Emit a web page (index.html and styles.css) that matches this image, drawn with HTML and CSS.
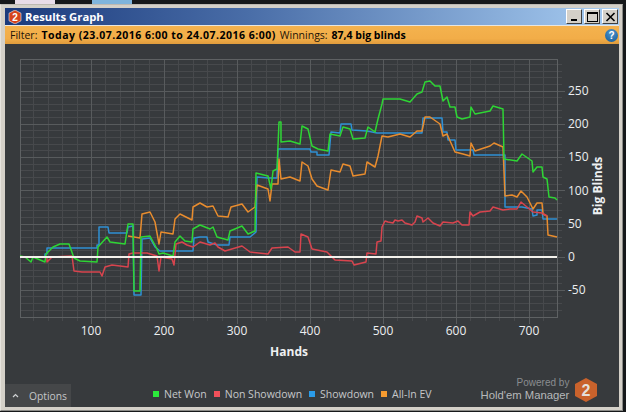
FILE: index.html
```
<!DOCTYPE html>
<html lang="en">
<head>
<meta charset="utf-8">
<title>Results Graph</title>
<link rel="stylesheet" href="styles.css">
</head>
<body>
<div class="desktop-top"><span class="chip chip-pink"></span><span class="chip chip-blue"></span></div>
<main class="window">
  <header class="titlebar">
    <svg class="app-logo" viewBox="0 0 14 14" width="14" height="14"><polygon points="7,0 13,3.2 13,10.8 7,14 1,10.8 1,3.2" class="logo-red"/><text x="7" y="11" class="logo-red-text">2</text></svg>
    <h1 class="title">Results Graph</h1>
    <div class="win-buttons">
      <button class="win-btn"><svg viewBox="0 0 15 14" width="15" height="14"><rect x="4" y="9" width="6" height="2" class="glyph"/></svg></button>
      <button class="win-btn"><svg viewBox="0 0 15 14" width="15" height="14"><rect x="2.5" y="2.5" width="10" height="9" class="glyph-box"/><rect x="2" y="2" width="11" height="2" class="glyph"/></svg></button>
      <button class="win-btn"><svg viewBox="0 0 15 14" width="15" height="14"><path d="M3.5 3 L11.5 11 M11.5 3 L3.5 11" class="glyph-x"/></svg></button>
    </div>
  </header>
  <div class="filterbar">
    <span>Filter:</span><b class="range">Today (23.07.2016 6:00 to 24.07.2016 6:00)</b><span>Winnings:</span><b class="win">87,4 big blinds</b>
    <span class="help">?</span>
  </div>
  <section class="panel">
    <svg class="chart" viewBox="5 45 615 327" width="615" height="327">
      <path class="grid-minor" d="M33.5 60V322M48.5 60V322M62.5 60V322M77.5 60V322M105.5 60V322M120.5 60V322M134.5 60V322M149.5 60V322M178.5 60V322M193.5 60V322M207.5 60V322M222.5 60V322M251.5 60V322M266.5 60V322M280.5 60V322M295.5 60V322M324.5 60V322M339.5 60V322M353.5 60V322M368.5 60V322M397.5 60V322M412.5 60V322M426.5 60V322M441.5 60V322M470.5 60V322M485.5 60V322M499.5 60V322M514.5 60V322M543.5 60V322"/>
      <path class="grid-minor" d="M20 65.5H562M20 72.5H562M20 78.5H562M20 85.5H562M20 98.5H562M20 105.5H562M20 111.5H562M20 118.5H562M20 131.5H562M20 138.5H562M20 145.5H562M20 151.5H562M20 165.5H562M20 171.5H562M20 178.5H562M20 185.5H562M20 198.5H562M20 204.5H562M20 211.5H562M20 218.5H562M20 231.5H562M20 238.5H562M20 244.5H562M20 251.5H562M20 264.5H562M20 271.5H562M20 277.5H562M20 284.5H562M20 297.5H562M20 304.5H562M20 311.5H562"/>
      <path class="grid-major" d="M91.5 60V325M164.5 60V325M237.5 60V325M310.5 60V325M383.5 60V325M456.5 60V325M529.5 60V325"/>
      <path class="grid-major" d="M20 92.5H565M20 125.5H565M20 158.5H565M20 191.5H565M20 225.5H565M20 258.5H565M20 291.5H565"/>
      <rect class="frame" x="20.5" y="60.5" width="537" height="257.5"/>

      <polyline class="line blue" points="20,258 45,258 45,255 47,255 47,249 97,249 97,246 99,246 99,228 108,228 109,234 127,234 128,228 133,227 134,296 141,296 142,240 150,239 155,248 160,252 193,252 194,239 200,238 207,238 208,243 217,246 229,246 230,238 250,238 256,233 257,178 268,179 271,179 277,179 278,150 299,150 310,150 311,153 317,153 317,156 329,156 331,133 340,134 341,125 351,125 352,131 367,132 377,134 422,134 423,119 442,119 443,133 447,133 448,141 455,141 456,151 473,151 474,156 503,156 505,156 505,208 522,208 532,210 533,217 537,216 537,211 542,211 543,220 557,220"/>
      <polyline class="line orange" points="128,237 140,239 142,215 150,213 155,223 159,245 161,233 173,235 175,220 180,215 192,221 193,208 200,204 207,208 213,207 218,217 228,218 231,208 242,205 248,213 255,208 257,186 268,190 270,202 272,185 278,185 279,160 281,180 290,178 300,182 302,163 308,167 312,180 317,187 328,191 331,171 340,173 343,165 350,167 353,177 365,175 367,163 375,168 378,157 382,137 388,138 400,135 410,138 417,132 422,132 425,118 430,118 440,125 443,137 447,135 455,153 463,155 470,157 471,144 475,152 490,147 494,144 503,148 505,197 512,196 517,198 521,192 527,198 533,210 537,204 542,204 543,215 547,217 548,236 557,238"/>
      <polyline class="line red" points="20,258 47,258 47,263 52,258 72,257 74,272 82,273 100,273 102,277 105,268 112,266 128,268 129,255 133,254 147,254 157,257 159,272 161,258 172,260 174,266 176,245 182,243 187,246 193,248 200,243 210,246 215,244 218,248 225,252 242,247 250,253 268,255 272,249 288,248 295,253 300,253 301,235 308,238 312,250 327,253 335,261 352,262 354,266 366,263 367,254 376,255 377,243 381,242 382,228 385,222 388,223 393,224 395,221 398,222 402,221 405,224 412,226 415,223 417,217 422,219 423,223 428,219 433,224 440,227 443,223 453,224 458,222 462,226 469,226 470,213 473,217 480,213 490,212 493,208 503,211 510,210 517,210 521,203 533,213 542,214 547,217"/>
      <polyline class="line green" points="20,257 25,258 31,263 33,258 45,263 46,255 53,248 60,245 69,245 74,259 80,262 97,263 98,248 107,238 110,243 125,245 128,225 133,225 134,292 140,292 141,238 150,237 157,250 159,255 163,254 173,257 175,243 180,237 185,242 192,243 193,230 200,226 210,230 213,228 217,238 228,241 230,232 242,227 248,235 255,232 256,174 268,177 271,190 273,172 277,170 279,123 281,123 281,143 290,142 300,145 302,127 308,130 312,147 318,150 328,152 330,135 340,137 343,128 350,130 353,140 365,139 368,128 375,133 378,120 382,105 383,100 400,100 410,103 417,95 422,93 425,83 430,82 435,87 440,87 443,102 447,98 450,108 455,108 457,118 462,120 470,118 471,108 475,115 490,112 493,107 503,110 504,160 517,162 522,155 532,162 533,173 537,168 542,168 543,178 547,180 549,198 555,199 557,201"/>
      <path class="zero" d="M20 258H557"/>

      <g class="tick">
        <text x="568" y="96">250</text><text x="568" y="129">200</text><text x="568" y="162">150</text><text x="568" y="196">100</text><text x="568" y="229">50</text><text x="568" y="262">0</text><text x="568" y="295">-50</text>
      </g>
      <g class="tick tick-x">
        <text x="91" y="336">100</text><text x="164" y="336">200</text><text x="237" y="336">300</text><text x="310" y="336">400</text><text x="383" y="336">500</text><text x="456" y="336">600</text><text x="529" y="336">700</text>
      </g>
      <text class="axis-label" x="289" y="357">Hands</text>
      <text class="axis-label" transform="translate(602 187) rotate(-90)">Big Blinds</text>
    </svg>
    <footer class="footer">
      <div class="options"><svg class="caret" viewBox="0 0 7 5" width="7" height="5"><path d="M1 4 L3.5 1.5 L6 4" class="caret-path"/></svg><span>Options</span></div>
      <ul class="legend">
        <li><i class="sw sw-green"></i>Net Won</li>
        <li><i class="sw sw-red"></i>Non Showdown</li>
        <li><i class="sw sw-blue"></i>Showdown</li>
        <li><i class="sw sw-orange"></i>All-In EV</li>
      </ul>
      <div class="brand">
        <div class="brand-text"><span class="powered">Powered by</span><span class="hem">Hold'em Manager</span></div>
        <svg class="brand-logo" viewBox="0 0 22 24" width="22" height="24"><polygon points="11,0 22,6 22,18 11,24 0,18 0,6" class="logo-orange"/><text x="11" y="18" class="logo-orange-text">2</text></svg>
      </div>
    </footer>
  </section>
</main>
</body>
</html>
```
FILE: styles.css
```
* { box-sizing: border-box; }
html, body { margin: 0; padding: 0; }
body {
  width: 626px; height: 412px; overflow: hidden;
  background: #16181a;
  font-family: "Open Sans", "Liberation Sans", sans-serif;
}
.desktop-top { height: 4px; display: flex; padding-left: 15px; gap: 37px; }
.chip { display: block; height: 4px; width: 40px; }
.chip-pink { background: #e8dce8; }
.chip-blue { background: #7fb4dc; }
.window {
  width: 623px; height: 407px;
  background: #d4d0c8;
  border-top: 1px solid #bdb9b2;
  border-right: 1px solid #8a8a86;
  border-bottom: 1px solid #8a8a86;
  border-left: 1px solid #e6e3dd;
  padding: 3px 3px 3px 4px;
  display: flex; flex-direction: column;
}
.titlebar {
  height: 18px; flex: none;
  display: flex; align-items: center;
  padding-left: 3px;
  background: linear-gradient(90deg, #1b3a7c 0%, #4a6ea8 40%, #a8cdf2 100%);
  border-bottom: 1px solid #e8e6e0;
}
.app-logo { flex: none; }
.logo-red { fill: #d6431c; stroke: #f2f2f2; stroke-width: .6; }
.logo-red-text { fill: #fff; font: 700 10px "Liberation Sans", sans-serif; text-anchor: middle; }
.title { margin: 0 0 0 3px; font: 700 11.3px "Open Sans", sans-serif; color: #fff; }
.win-buttons { margin-left: auto; display: flex; gap: 2px; padding-right: 1px; }
.win-btn {
  width: 16px; height: 15px; padding: 0; display: block;
  background: #d4d0c8;
  border: 1px solid; border-color: #fff #404040 #404040 #fff;
}
.win-btn svg { display: block; }
.glyph { fill: #000; }
.glyph-box { fill: none; stroke: #000; }
.glyph-x { fill: none; stroke: #000; stroke-width: 1.6; }
.filterbar {
  height: 18px; flex: none;
  display: flex; align-items: center;
  padding-left: 5px; gap: 4px;
  background: linear-gradient(180deg, #f4b24e, #f2ad48 70%, #e09c3c);
  font-size: 10.5px; color: #1c1408;
}
.range { color: #000; font-weight: 700; letter-spacing: .5px; }
.win { color: #000; font-weight: 700; }
.help {
  margin-left: auto; margin-right: 1px;
  width: 13px; height: 13px; border-radius: 50%;
  background: radial-gradient(circle at 50% 30%, #4d94cc, #125a98);
  color: #fff; font: 700 10px/13px "Liberation Sans", sans-serif; text-align: center;
}
.panel { flex: 1; background: #373a3d; display: flex; flex-direction: column; min-height: 0; }
.chart { display: block; flex: none; }
.grid-minor { stroke: #47494c; fill: none; stroke-width: 1; shape-rendering: crispEdges; }
.grid-major { stroke: #585b5d; fill: none; stroke-width: 1; shape-rendering: crispEdges; }
.frame { fill: none; stroke: #5e6163; stroke-width: 1; shape-rendering: crispEdges; }
.line { fill: none; stroke-width: 1.5; stroke-linejoin: round; }
.green { stroke: #2ed534; }
.red { stroke: #d8444e; }
.blue { stroke: #2f90d4; }
.orange { stroke: #e88c2e; }
.zero { stroke: #f4f2ec; stroke-width: 2.2; fill: none; }
.tick text { fill: #eceef0; font: 12px "Open Sans", sans-serif; }
.tick-x text { text-anchor: middle; }
.axis-label { fill: #eef0f2; font: 700 12px "Open Sans", sans-serif; text-anchor: middle; }
.footer { flex: 1; display: flex; align-items: flex-end; min-height: 0; }
.options {
  width: 66px; height: 23px; flex: none;
  background: #454749;
  display: flex; align-items: center;
  padding-left: 7px; gap: 10px;
  font-size: 10.3px; color: #c4c6c8;
}
.caret { flex: none; }
.caret-path { fill: none; stroke: #d0d2d4; stroke-width: 1.2; }
.legend {
  list-style: none; margin: 0 0 5px 82px; padding: 0;
  display: flex; gap: 7px;
  font-size: 10.5px; color: #c6c8ca;
  line-height: 16px;
}
.legend li { display: flex; align-items: center; gap: 5px; }
.sw { display: block; width: 6px; height: 6px; }
.sw-green { background: #2bea3b; }
.sw-red { background: #f0505a; }
.sw-blue { background: #2b9be8; }
.sw-orange { background: #f59b30; }
.brand { margin-left: 49px; margin-bottom: 5px; display: flex; align-items: center; gap: 6px; }
.brand-text { display: flex; flex-direction: column; align-items: flex-end; font-family: "Liberation Sans", sans-serif; }
.powered { font-size: 10px; line-height: 12px; color: #8a8d90; }
.hem { font-size: 11.3px; line-height: 13px; color: #b6b8ba; }
.logo-orange { fill: #c9622c; }
.logo-orange-text { fill: #e4e0dc; font: 700 16px "Liberation Sans", sans-serif; text-anchor: middle; }
```
